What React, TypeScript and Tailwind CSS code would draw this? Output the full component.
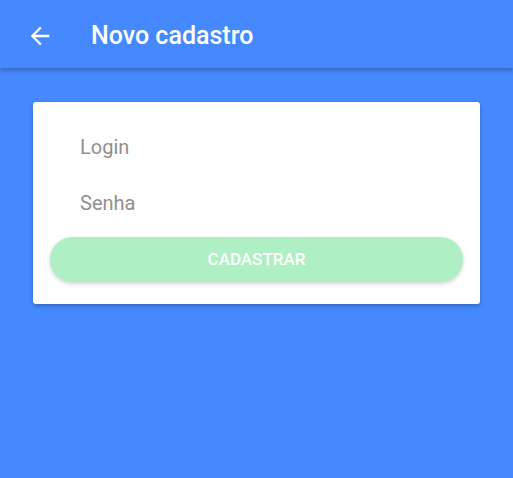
export default function App() {
  return (
    <div className="min-h-[478px] w-full bg-[#4689fe] font-['Roboto',sans-serif]">
      <header className="flex h-[68px] items-center bg-[#4689fe] pt-[3px] shadow-[0_3px_4px_rgba(0,0,0,0.22)]">
        <button className="ml-[26px] flex h-7 w-7 items-center justify-center text-white">
          <svg width="28" height="28" viewBox="0 0 24 24" fill="currentColor">
            <path d="M20 11H7.83l5.59-5.59L12 4l-8 8 8 8 1.41-1.41L7.83 13H20v-2z" />
          </svg>
        </button>
        <h1 className="ml-[37px] text-[25px] font-medium text-white">Novo cadastro</h1>
      </header>

      <div className="px-[33px] pt-[34px]">
        <div className="rounded-[3px] bg-white px-[17px] pb-[22px] pt-[17px] shadow-[0_2px_4px_rgba(0,0,0,0.25)]">
          <input
            placeholder="Login"
            className="block h-[56px] w-full bg-transparent px-[30px] text-[20px] text-gray-700 outline-none placeholder:text-[#8f8f8f]"
          />
          <input
            placeholder="Senha"
            type="password"
            className="block h-[56px] w-full bg-transparent px-[30px] text-[20px] text-gray-700 outline-none placeholder:text-[#8f8f8f]"
          />
          <button className="mt-[6px] h-[45px] w-full rounded-full bg-[#aef0c4] text-[17px] font-medium text-white shadow-[0_2px_4px_rgba(0,0,0,0.18)]">
            CADASTRAR
          </button>
        </div>
      </div>
    </div>
  );
}
